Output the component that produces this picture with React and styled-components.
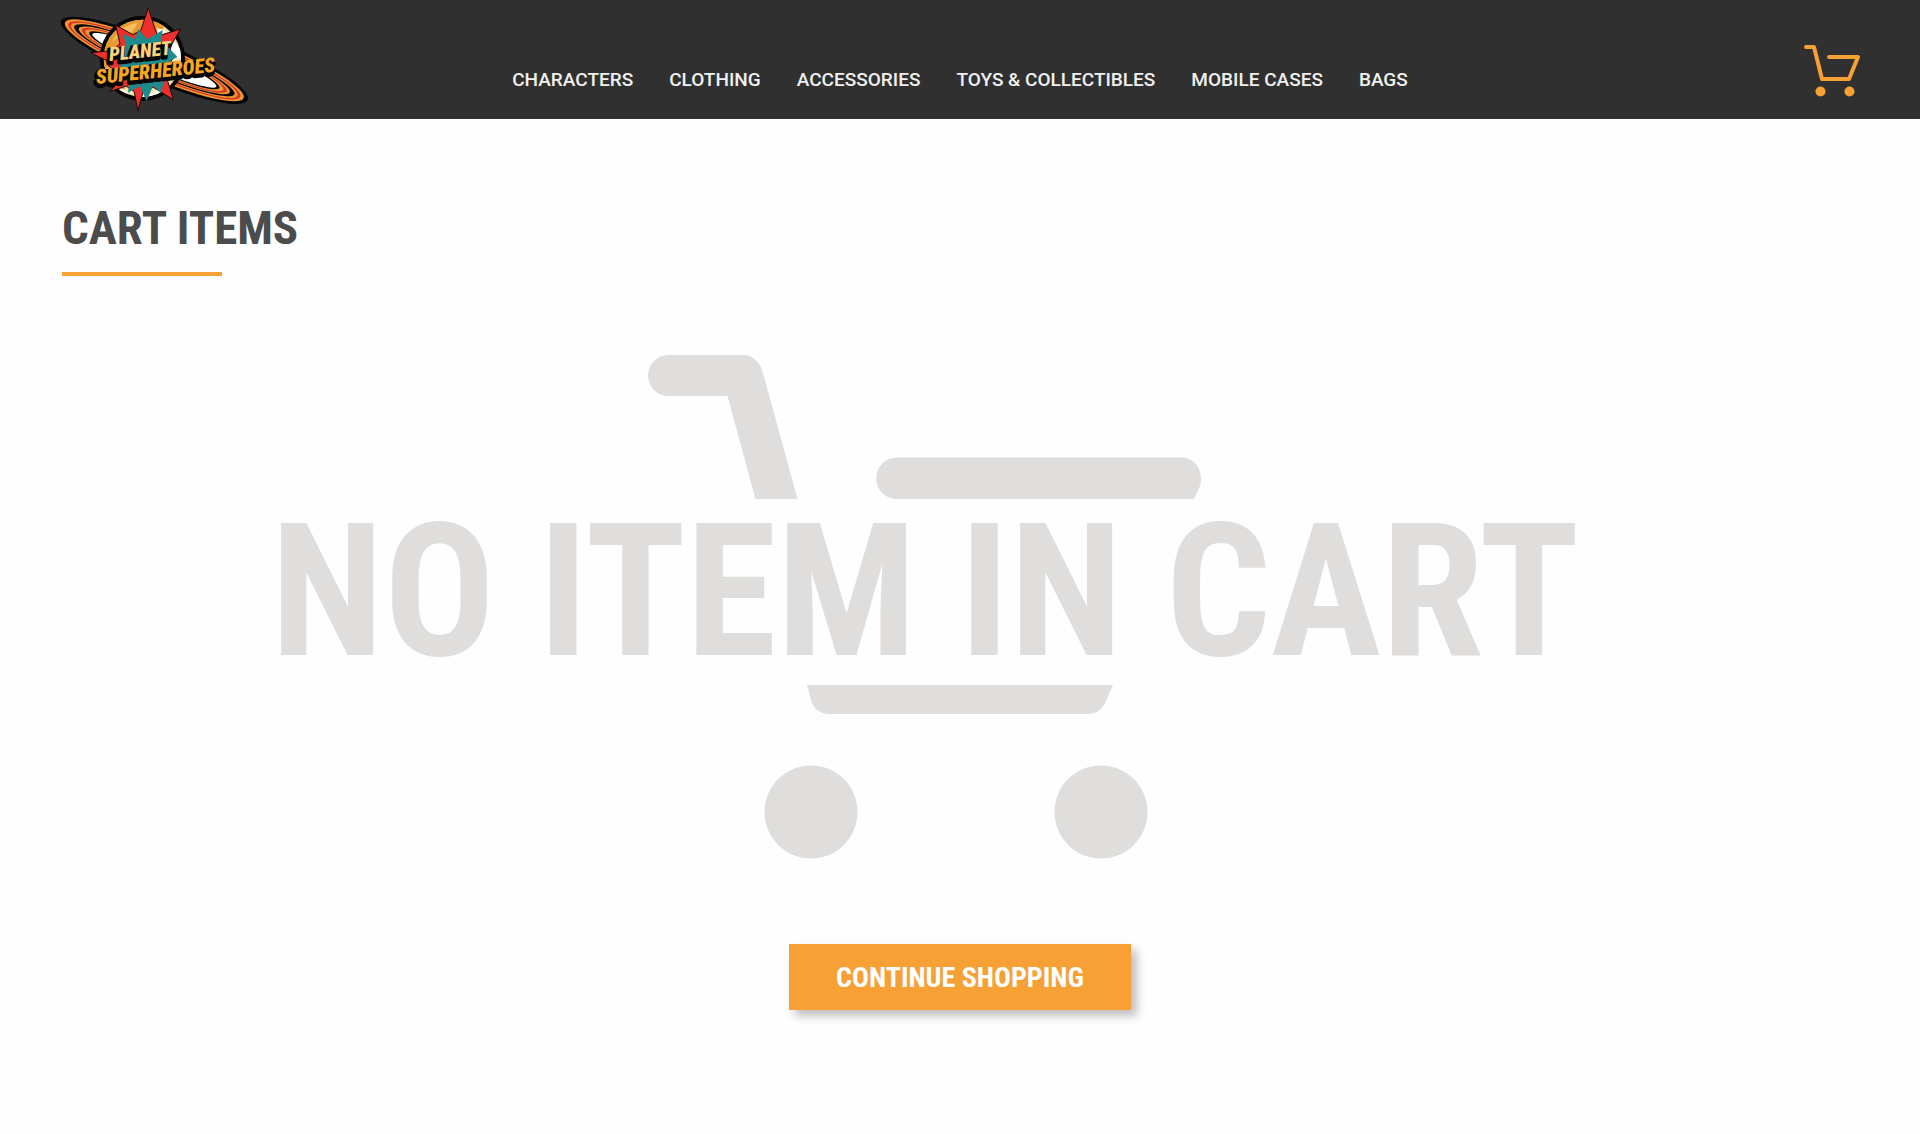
import React from 'react';
import styled, { createGlobalStyle } from 'styled-components';

const orange = '#f6a036';
const pageBackground = '#fefefe';
const displayFont = '"Roboto Condensed", Roboto, sans-serif';

const GlobalStyle = createGlobalStyle`
  body {
    margin: 0;
    background: ${pageBackground};
    font-family: Roboto, sans-serif;
  }
`;

const Header = styled.header`
  display: grid;
  grid-template-columns: 1fr auto 1fr;
  height: 119px;
  padding: 0 60px;
  background: #303030;
`;

const LogoLink = styled.a`
  justify-self: start;
  padding-top: 6px;
`;

const LogoText = styled.text`
  font-family: ${displayFont};
  font-style: italic;
  font-weight: 900;
`;

const Nav = styled.nav`
  display: flex;
  align-items: flex-end;
  gap: 36px;
  padding-bottom: 27px;
`;

const NavLink = styled.a`
  color: #f0f0f0;
  font-size: 19px;
  font-weight: 500;
  line-height: 24px;
  text-decoration: none;
`;

const CartLink = styled.a`
  justify-self: end;
  padding-top: 44px;
`;

const Main = styled.main`
  padding: 80px 62px;
`;

const Heading = styled.h1`
  margin: 0;
  color: #4c4c4c;
  font-family: ${displayFont};
  font-size: 47px;
  line-height: 58px;

  &::after {
    content: '';
    display: block;
    width: 160px;
    height: 4px;
    margin-top: 15px;
    background: ${orange};
  }
`;

const EmptyState = styled.section`
  display: grid;
  justify-items: center;
  margin-top: 79px;
`;

const EmptyFigure = styled.div`
  display: grid;
  place-items: start center;
  padding-right: 70px;
  color: #dfdedc;
`;

const CartArt = styled.svg`
  grid-area: 1 / 1;
`;

// Shares the grid cell with CartArt, its background cuts the cart in two
const EmptyText = styled.p`
  grid-area: 1 / 1;
  margin: 144px 0 0;
  background: ${pageBackground};
  font-family: ${displayFont};
  font-size: 185px;
  font-weight: 700;
  line-height: 186px;
  white-space: nowrap;
`;

const ContinueButton = styled.button`
  height: 66px;
  margin-top: 85px;
  padding: 0 47px;
  border: 0;
  background: ${orange};
  box-shadow: 6px 6px 9px rgba(0, 0, 0, 0.25);
  color: #fff;
  font-family: ${displayFont};
  font-size: 28px;
  font-weight: 700;
  cursor: pointer;
`;

const links = [
  'CHARACTERS',
  'CLOTHING',
  'ACCESSORIES',
  'TOYS & COLLECTIBLES',
  'MOBILE CASES',
  'BAGS',
];

// Saturn-like rings from the outside in: x radius, y radius, colour
const rings = [
  [304, 60, '#050505'],
  [291, 51, '#ee9433'],
  [280, 46, '#d5382b'],
  [271, 42, '#ee9433'],
  [261, 39, '#050505'],
  [246, 36, '#ee9433'],
  [236, 34, '#d5382b'],
  [225, 31, '#ee9433'],
  [212, 29, '#050505'],
  [202, 25, '#ffffff'],
];

const Logo = () => (
  <svg width="190" height="106" viewBox="28 18 570 318" aria-hidden="true">
    <defs>
      <clipPath id="planet">
        <circle cx="275" cy="175" r="116" />
      </clipPath>
    </defs>
    <g transform="rotate(23 311 181)">
      {rings.map(([rx, ry, fill]) => (
        <ellipse key={rx} cx="311" cy="181" rx={rx} ry={ry} fill={fill} />
      ))}
    </g>
    <circle cx="275" cy="175" r="128" fill="#050505" />
    <g clipPath="url(#planet)">
      <path fill="#f6e3b4" d="M150 40h250v270H150z" />
      <path fill="#e79a2f" d="M150 40H350L340 84L300 104L240 130L200 190L150 215z" />
      <path fill="#f6bd62" d="M184 126Q206 76 262 68L244 96L208 108z" />
      <path fill="#fff" d="M318 84L345 92L330 116zM366 120L392 150V180L360 160z" />
      <path fill="#e79a2f" d="M158 232L200 252L226 246L222 268L190 262z" />
      <path fill="#fffaf0" d="M180 262L220 270L240 290L300 282L340 260V310H200z" />
    </g>
    <path
      fill="#ee2f2b"
      stroke="#1a0a08"
      strokeWidth="3"
      d="M293 25L314 90L322 108L390 87L358 142L366 176L340 220L352 246L368 299L308 262L278 272L262 332L250 274L226 258L178 275L214 232L176 200L168 182L120 158L182 152L208 132L195 75L246 104L270 92z"
    />
    <path
      fill="#1b8b8e"
      d="M262 88L290 118L336 90L332 126L352 142L380 170L350 188L346 226L330 280L308 256L288 303L268 258L232 278L236 244L190 232L212 190L206 150L226 140L218 102L254 118z"
    />
    <path fill="#ee2f2b" d="M293 30L311 92L293 116L272 94z" />
    <g strokeLinejoin="round" strokeWidth="12" transform="rotate(-6 178 183)">
      <LogoText x="172" y="190" fontSize="58" fill="#050505" stroke="#050505">
        PLANET
      </LogoText>
    </g>
    <g strokeLinejoin="round" strokeWidth="12" transform="rotate(-6 140 254)">
      <LogoText x="134" y="259" fontSize="61" fill="#050505" stroke="#050505">
        SUPERHEROES
      </LogoText>
      <LogoText
        x="138"
        y="252"
        fontSize="61"
        fill="#f5a623"
        aria-hidden="true"
      >
        SUPERHEROES
      </LogoText>
    </g>
    <g transform="rotate(-6 178 183)">
      <LogoText
        x="177"
        y="183"
        fontSize="58"
        fill="#fbd27e"
        aria-hidden="true"
      >
        PLANET
      </LogoText>
    </g>
  </svg>
);

const SmallCart = () => (
  <svg width="56" height="54" viewBox="0 0 56 54" fill="none">
    <path
      d="M2 3h8l8 32h27l9-22H25"
      stroke={orange}
      strokeWidth="4"
      strokeLinecap="round"
      strokeLinejoin="round"
    />
    <circle cx="16.5" cy="47.5" r="5" fill={orange} />
    <circle cx="45.5" cy="47.5" r="5" fill={orange} />
  </svg>
);

const LargeCart = () => (
  <CartArt
    width="554"
    height="504"
    viewBox="648 355 554 504"
    fill="currentColor"
    aria-hidden="true"
  >
    <path d="M668.5 355H743C753 355 760 362 763 373L797.5 499H755.5L727.5 396H668.5A20.5 20.5 0 0 1 668.5 355Z" />
    <path d="M897 457.5H1181C1193 457.5 1201 467 1201 478Q1201 482 1200 486L1194 499H897A20.5 20.5 0 0 1 897 457.5Z" />
    <path d="M807 685H1113L1105 703Q1100 714 1088 714H830Q815 714 811 700Z" />
    <circle cx="811" cy="812" r="46.5" />
    <circle cx="1101" cy="812" r="46.5" />
  </CartArt>
);

const App = () => (
  <>
    <GlobalStyle />
    <Header>
      <LogoLink href="#" aria-label="Planet Superheroes">
        <Logo />
      </LogoLink>
      <Nav>
        {links.map(label => (
          <NavLink key={label} href="#">
            {label}
          </NavLink>
        ))}
      </Nav>
      <CartLink href="#" aria-label="Cart">
        <SmallCart />
      </CartLink>
    </Header>
    <Main>
      <Heading>CART ITEMS</Heading>
      <EmptyState>
        <EmptyFigure>
          <LargeCart />
          <EmptyText>NO ITEM IN CART</EmptyText>
        </EmptyFigure>
        <ContinueButton type="button">CONTINUE SHOPPING</ContinueButton>
      </EmptyState>
    </Main>
  </>
);

export default App;
